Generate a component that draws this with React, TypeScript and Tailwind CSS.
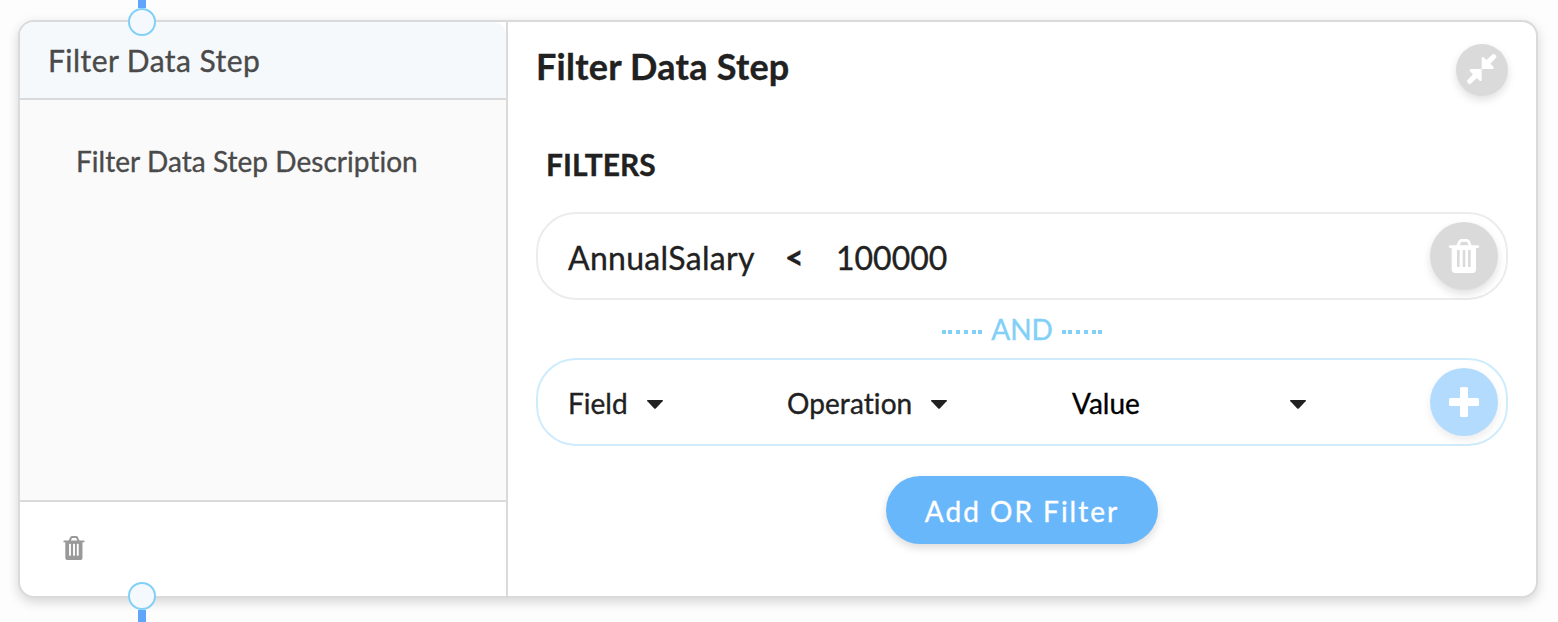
import React from "react";

function TrashIcon({ className }: { className: string }) {
  return (
    <svg viewBox="0 0 90 102" className={className} fill="currentColor" aria-hidden="true">
      <path
        fillRule="evenodd"
        d="M3 19H22L29 5Q32 0 37 0H54Q59 0 62 5L68 19H87Q90 19 90 22V24Q90 27 87 27H81V91Q81 102 71 102H19Q8 102 8 91V27H3Q0 27 0 24V22Q0 19 3 19ZM32 19H59L55 10Q54 8 52 8H39Q37 8 36 10ZM26 33Q24 33 24 35V82Q24 84 26 84H30Q32 84 32 82V35Q32 33 30 33ZM43 33Q41 33 41 35V82Q41 84 43 84H47Q49 84 49 82V35Q49 33 47 33ZM59 33Q57 33 57 35V82Q57 84 59 84H63Q65 84 65 82V35Q65 33 63 33Z"
      />
    </svg>
  );
}

function CompressIcon() {
  return (
    <svg viewBox="0 0 96 96" className="relative -top-px h-8 w-8" fill="currentColor" aria-hidden="true">
      <path d="M47 48V81Q46 86 41 83L33 75L14 92Q11 95 8 92L4 88Q1 85 4 82L21 64L12 55Q9 49 14 48Z" />
      <path d="M47 48V15Q48 10 53 13L61 21L80 4Q83 1 86 4L90 8Q93 11 90 14L73 32L82 41Q85 47 80 48Z" />
    </svg>
  );
}

function PlusIcon() {
  return (
    <svg viewBox="0 0 30 30" className="h-[30px] w-[30px]" fill="currentColor" aria-hidden="true">
      <rect x="11" y="0" width="8" height="30" rx="1.5" />
      <rect x="0" y="11" width="30" height="8" rx="1.5" />
    </svg>
  );
}

function Caret() {
  return (
    <svg viewBox="0 0 16 9" className="mt-[3px] h-[9px] w-4 shrink-0" fill="#212121" aria-hidden="true">
      <path d="M.5 0H15.5Q16.3 .5 15.6 1.3L9 8.3Q8 9.3 7 8.3L.4 1.3Q-.3 .5 .5 0Z" />
    </svg>
  );
}

function Dots() {
  return (
    <svg viewBox="0 0 40 4" className="mt-1.5 h-1 w-10" fill="#81d0f7" shapeRendering="crispEdges" aria-hidden="true">
      {[0, 6, 14, 22, 30, 36].map((x) => (
        <rect key={x} x={x} y="0" width="4" height="4" />
      ))}
    </svg>
  );
}

function Connector({ className }: { className: string }) {
  return (
    <div className={`absolute left-[128px] flex w-7 items-center ${className}`}>
      <span className="h-7 w-7 shrink-0 rounded-full border-2 border-[#81d0f7] bg-[#f5f9fd]" />
      <span className="h-5 w-2 shrink-0 bg-[#5ea5fb]" />
    </div>
  );
}

export default function App() {
  return (
    <main className="relative h-[622px] w-[1558px] overflow-hidden bg-[#fdfdfd] px-[18px] pt-5 font-['Lato',sans-serif] text-[#212121] [font-variant-ligatures:none] [-webkit-text-stroke:0.35px]">
      <div className="flex h-[578px] w-[1520px] overflow-hidden rounded-[16px] border-2 border-[#dadada] bg-white shadow-[0_4px_12px_rgba(0,0,0,0.16)]">
        <aside className="flex w-[488px] shrink-0 flex-col border-r-2 border-[#dadada] text-[#4a4a4a]">
          <header className="flex h-[78px] items-center rounded-tr-[14px] border-b-2 border-[#dadada] bg-[#f5f9fc] pl-7">
            <h2 className="text-[30px] leading-9 tracking-[0.45px]">Filter Data Step</h2>
          </header>
          <div className="h-[400px] bg-[#fafafa] px-14 pt-[43px]">
            <p className="text-[28px] leading-9 tracking-[0.04px]">Filter Data Step Description</p>
          </div>
          <footer className="flex flex-1 items-center border-t-2 border-[#dadada] pb-[3px] pl-[43px]">
            <button aria-label="Delete step" className="text-[#999]">
              <TrashIcon className="block h-[24px] w-[22px]" />
            </button>
          </footer>
        </aside>

        <section className="flex flex-1 flex-col px-7 pt-[22px]">
          <div className="flex h-[102px] items-start justify-between">
            <h1 className="text-[36px] leading-[44px] font-bold tracking-[0.25px]">Filter Data Step</h1>
            <button
              aria-label="Collapse"
              className="flex h-[52px] w-[52px] items-center justify-center rounded-full bg-[#dadada] text-white shadow-[0_4px_8px_rgba(0,0,0,0.12)]"
            >
              <CompressIcon />
            </button>
          </div>
          <h3 className="h-[66px] pl-[10px] text-[30px] leading-9 font-bold">FILTERS</h3>

          <div className="flex h-[88px] shrink-0 items-center rounded-[40px] border-2 border-[#ececec] pr-2 pl-[30px] text-[32px]">
            <span className="w-[217px] pt-1 tracking-[0.3px]">AnnualSalary</span>
            <span className="w-[51px] pt-0.5 font-black">&lt;</span>
            <span className="flex-1 pt-1">100000</span>
            <button
              aria-label="Delete filter"
              className="flex h-[68px] w-[68px] items-center justify-center rounded-full bg-[#dadada] text-white shadow-[0_4px_8px_rgba(0,0,0,0.12)]"
            >
              <TrashIcon className="h-[34px] w-[30px]" />
            </button>
          </div>

          <div className="flex h-[58px] items-center justify-center gap-[9px] text-[28px] text-[#81d0f7]">
            <Dots />
            <span className="w-[62px] text-center">AND</span>
            <Dots />
          </div>

          <div className="flex h-[88px] shrink-0 items-center rounded-[40px] border-2 border-[#ceecfc] pr-2 pl-[30px] text-[28px]">
            <div className="flex w-[219px] items-center gap-[19px] pt-0.5">
              <span>Field</span>
              <Caret />
            </div>
            <div className="flex w-[285px] items-center gap-[19px] pt-0.5">
              <span className="tracking-[0.08px]">Operation</span>
              <Caret />
            </div>
            <div className="flex w-[234px] items-center justify-between pt-0.5 text-black">
              <span>Value</span>
              <Caret />
            </div>
            <button
              aria-label="Add filter"
              className="ml-auto flex h-[68px] w-[68px] items-center justify-center rounded-full bg-[#b3dbfe] text-white shadow-[0_4px_8px_rgba(0,0,0,0.08)]"
            >
              <PlusIcon />
            </button>
          </div>

          <button className="mx-auto mt-[30px] h-[68px] w-[272px] rounded-full bg-[#69b7fb] pt-0.5 text-[28px] tracking-[2px] text-white shadow-[0_4px_8px_rgba(0,0,0,0.14)]">
            Add OR Filter
          </button>
        </section>
      </div>
      <Connector className="bottom-[586px] flex-col-reverse" />
      <Connector className="top-[582px] flex-col" />
    </main>
  );
}
